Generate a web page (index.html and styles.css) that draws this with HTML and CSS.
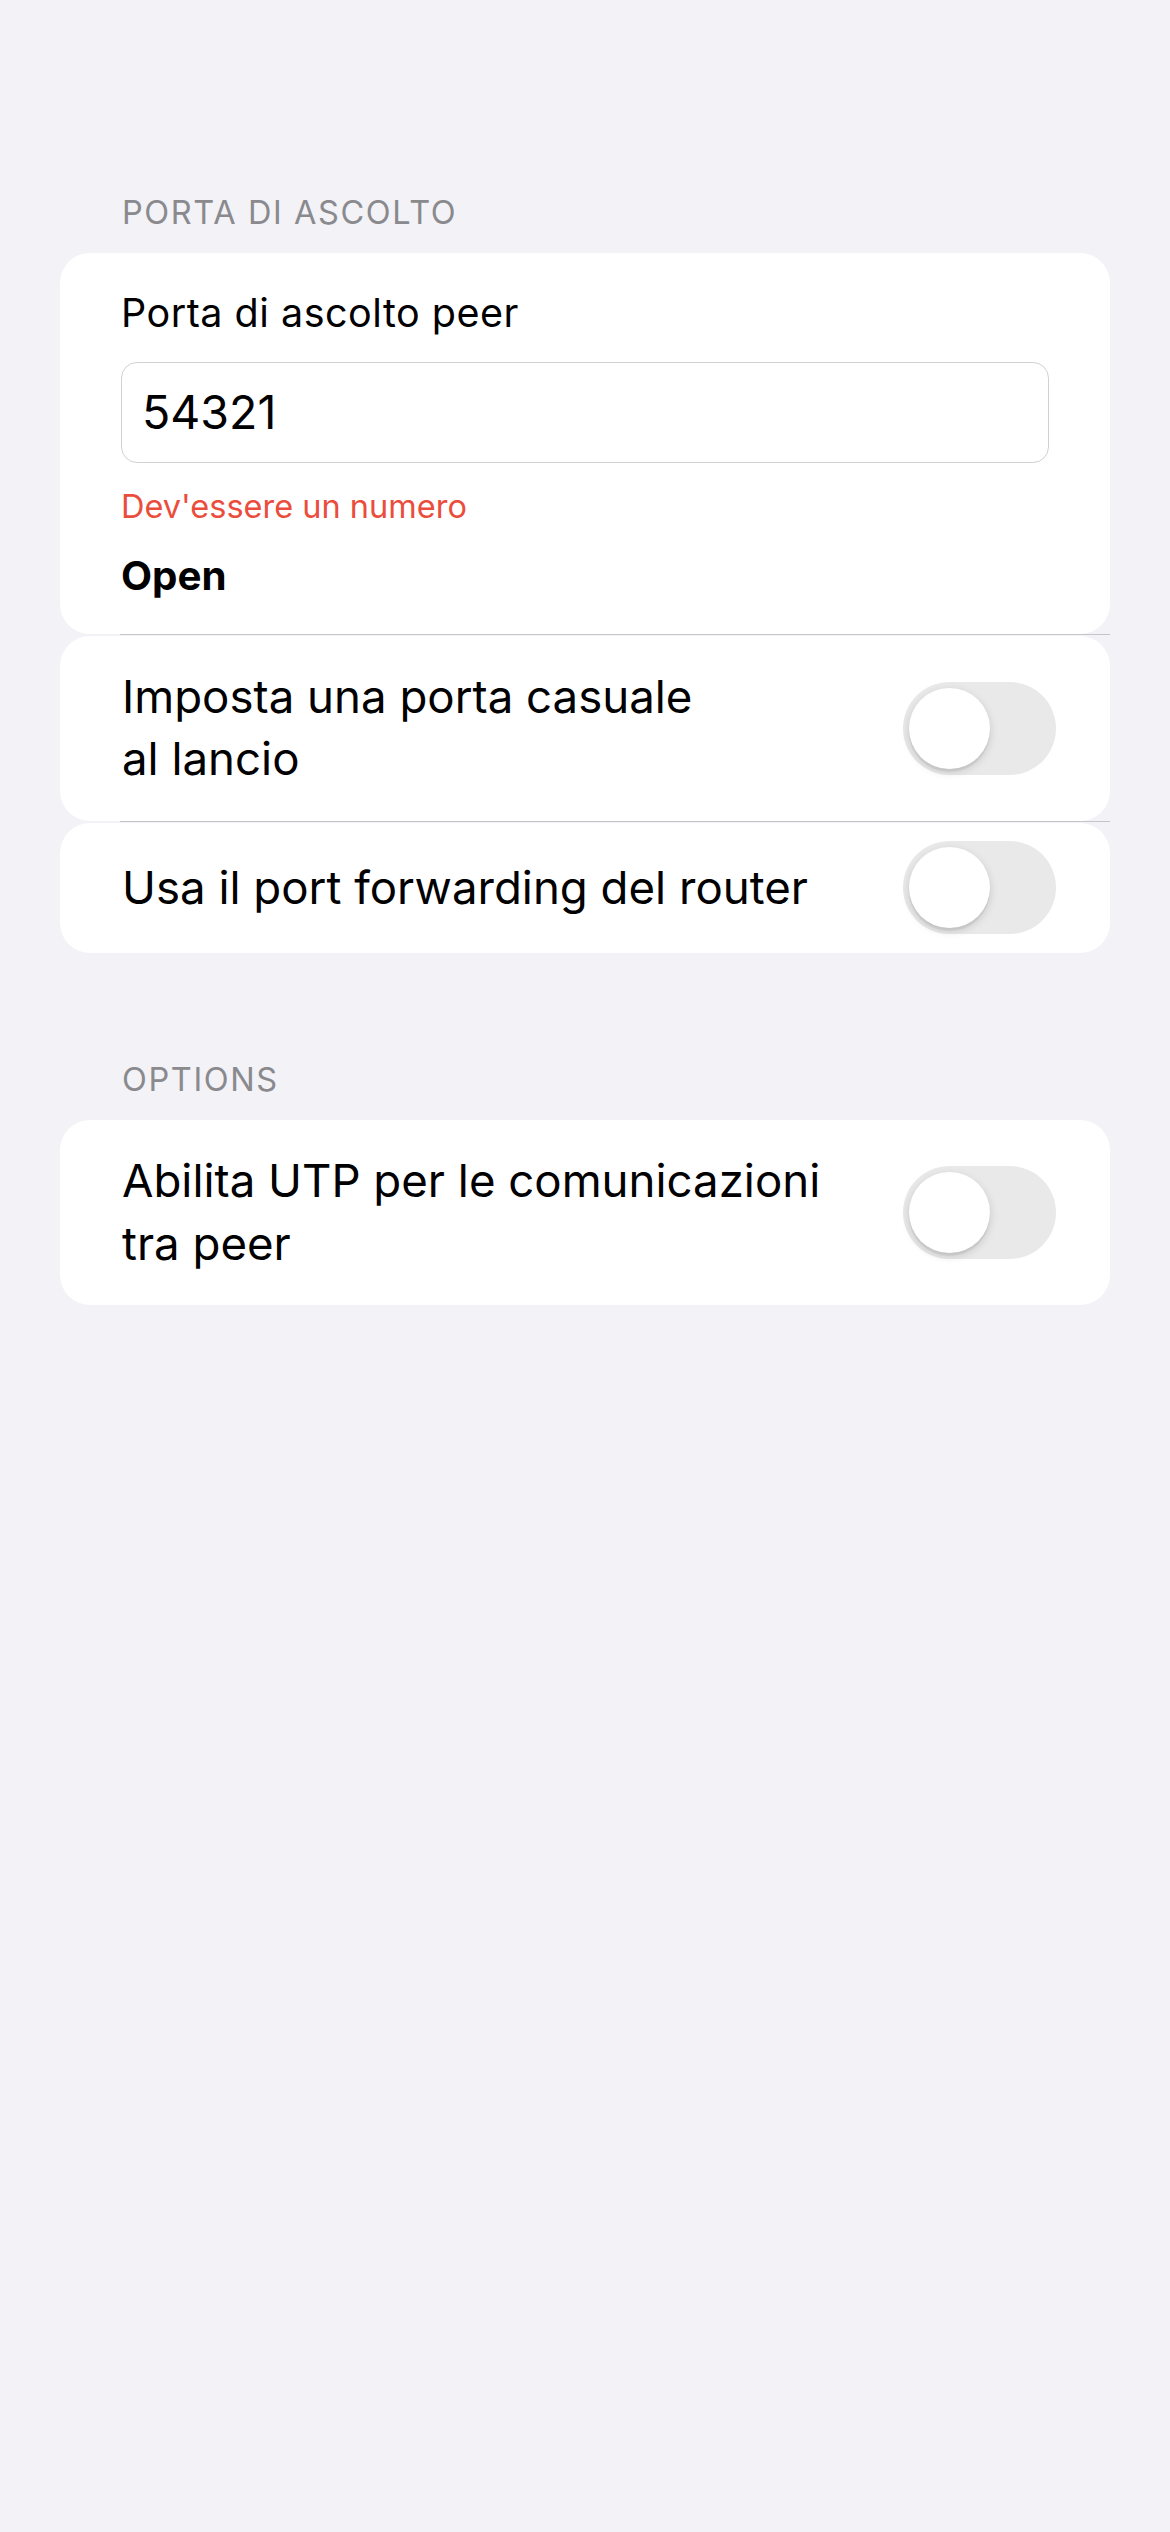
FILE: index.html
```html
<!DOCTYPE html>
<html lang="it">
<head>
<meta charset="utf-8">
<title>Porta di ascolto</title>
<link rel="stylesheet" href="styles.css">
</head>
<body>
<main class="screen">
  <section class="group">
    <h2 class="group-title">PORTA DI ASCOLTO</h2>
    <div class="card card-form">
      <label class="field-label">Porta di ascolto peer</label>
      <div class="input">54321</div>
      <p class="error">Dev'essere un numero</p>
      <p class="status">Open</p>
    </div>
    <div class="sep"></div>
    <div class="card row">
      <span class="row-label">Imposta una porta casuale<br>al lancio</span>
      <span class="switch"><span class="knob"></span></span>
    </div>
    <div class="sep"></div>
    <div class="card row">
      <span class="row-label">Usa il port forwarding del router</span>
      <span class="switch"><span class="knob"></span></span>
    </div>
  </section>
  <section class="group">
    <h2 class="group-title">OPTIONS</h2>
    <div class="card row">
      <span class="row-label">Abilita UTP per le comunicazioni<br>tra peer</span>
      <span class="switch"><span class="knob"></span></span>
    </div>
  </section>
</main>
</body>
</html>
```
FILE: styles.css
```css
body {
  margin: 0;
  background: #f2f2f7;
  font-family: Inter, "Noto Sans", sans-serif;
  color: #000;
}
.screen {
  padding: 193px 60px 0;
}
.group + .group {
  margin-top: 107px;
}
.group-title {
  margin: 0 0 20px 62px;
  font-size: 32.5px;
  line-height: 40px;
  letter-spacing: 1.6px;
  font-weight: 400;
  color: #8a8a8e;
}
.card {
  background: #fff;
  border-radius: 30px;
}
.card-form {
  padding: 35.5px 61px 34px;
}
.field-label {
  display: block;
  font-size: 39.5px;
  line-height: 48px;
  letter-spacing: 0.5px;
}
.input {
  margin-top: 25px;
  height: 101px;
  box-sizing: border-box;
  border: 1.5px solid #d1d1d6;
  border-radius: 16px;
  padding-left: 20px;
  display: flex;
  align-items: center;
  font-size: 46.5px;
}
.error {
  margin: 24px 0 0;
  font-size: 32.5px;
  line-height: 40px;
  color: #eb4d3d;
}
.status {
  margin: 25px 0 0;
  font-size: 40.3px;
  line-height: 48px;
  font-weight: 700;
}
.sep {
  height: 1px;
  background: #c6c6c8;
  margin: 0 0 1px 60px;
}
.row {
  display: flex;
  align-items: center;
  justify-content: space-between;
  min-height: 130px;
  padding: 0 54px 0 62px;
}
.row-label {
  padding: 30px 0;
  font-size: 45.6px;
  line-height: 62.7px;
}
.switch {
  position: relative;
  flex: none;
  width: 153px;
  height: 93px;
  border-radius: 46.5px;
  background: #e9e9ea;
}
.knob {
  position: absolute;
  top: 6px;
  left: 6px;
  width: 81px;
  height: 81px;
  border-radius: 50%;
  background: #fff;
  box-shadow: 0 3px 8px rgba(0, 0, 0, 0.15), 0 3px 1px rgba(0, 0, 0, 0.06);
}
```
